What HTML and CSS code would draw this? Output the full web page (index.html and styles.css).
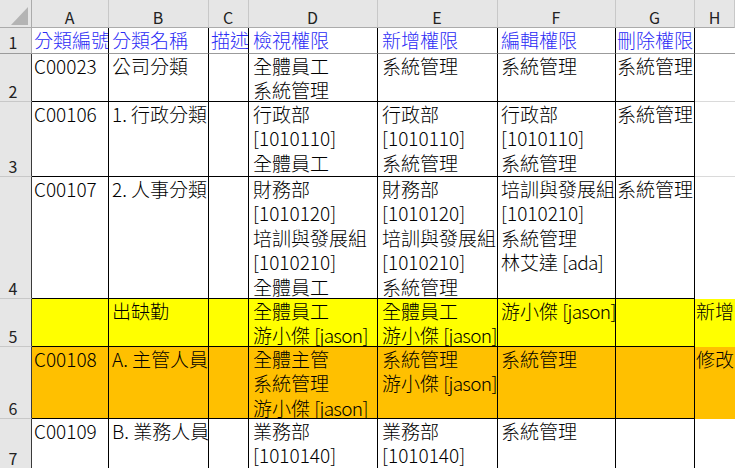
FILE: index.html
```html
<!DOCTYPE html>
<html lang="zh-Hant">
<head>
<meta charset="utf-8">
<title>Sheet</title>
<link rel="stylesheet" href="styles.css">
</head>
<body>
<div class="sheet">
  <div class="c corner"><svg width="31" height="27" viewBox="0 0 31 27"><polygon points="11,25 28,25 28,7" fill="#b4b4b4"/></svg></div>
  <div class="c hd">A</div>
  <div class="c hd">B</div>
  <div class="c hd">C</div>
  <div class="c hd">D</div>
  <div class="c hd">E</div>
  <div class="c hd">F</div>
  <div class="c hd">G</div>
  <div class="c hd hd-last">H</div>

  <div class="c rn">1</div>
  <div class="c t pa">分類編號</div>
  <div class="c t pb">分類名稱</div>
  <div class="c t pc">描述</div>
  <div class="c t pd">檢視權限</div>
  <div class="c t pe">新增權限</div>
  <div class="c t pf">編輯權限</div>
  <div class="c t pg">刪除權限</div>
  <div class="c ht"></div>

  <div class="c rn rb">2</div>
  <div class="c b pa">C00023</div>
  <div class="c b pb">公司分類</div>
  <div class="c b pc"></div>
  <div class="c b pd">全體員工<br>系統管理</div>
  <div class="c b pe">系統管理</div>
  <div class="c b pf">系統管理</div>
  <div class="c b pg">系統管理</div>
  <div class="c h"></div>

  <div class="c rn rb">3</div>
  <div class="c b pa">C00106</div>
  <div class="c b pb">1. 行政分類</div>
  <div class="c b pc"></div>
  <div class="c b pd">行政部<br>[1010110]<br>全體員工</div>
  <div class="c b pe">行政部<br>[1010110]<br>系統管理</div>
  <div class="c b pf">行政部<br>[1010110]<br>系統管理</div>
  <div class="c b pg">系統管理</div>
  <div class="c h"></div>

  <div class="c rn rb">4</div>
  <div class="c b pa">C00107</div>
  <div class="c b pb">2. 人事分類</div>
  <div class="c b pc"></div>
  <div class="c b pd">財務部<br>[1010120]<br>培訓與發展組<br>[1010210]<br>全體員工</div>
  <div class="c b pe">財務部<br>[1010120]<br>培訓與發展組<br>[1010210]<br>系統管理</div>
  <div class="c b pf">培訓與發展組<br>[1010210]<br>系統管理<br>林艾達 <span class="nm">[ada]</span></div>
  <div class="c b pg">系統管理</div>
  <div class="c h h-nob"></div>

  <div class="c rn rb">5</div>
  <div class="c b y pa"></div>
  <div class="c b y pb">出缺勤</div>
  <div class="c b y pc"></div>
  <div class="c b y pd">全體員工<br>游小傑 <span class="nm">[jason]</span></div>
  <div class="c b y pe">全體員工<br>游小傑 <span class="nm">[jason]</span></div>
  <div class="c b y pf">游小傑 <span class="nm">[jason]</span></div>
  <div class="c b y pg"></div>
  <div class="c hf y">新增</div>

  <div class="c rn rb">6</div>
  <div class="c b o pa">C00108</div>
  <div class="c b o pb">A. 主管人員</div>
  <div class="c b o pc"></div>
  <div class="c b o pd">全體主管<br>系統管理<br>游小傑 <span class="nm">[jason]</span></div>
  <div class="c b o pe">系統管理<br>游小傑 <span class="nm">[jason]</span></div>
  <div class="c b o pf">系統管理</div>
  <div class="c b o pg"></div>
  <div class="c hf o">修改</div>

  <div class="c rn rb">7</div>
  <div class="c b pa">C00109</div>
  <div class="c b pb">B. 業務人員</div>
  <div class="c b pc"></div>
  <div class="c b pd">業務部<br>[1010140]</div>
  <div class="c b pe">業務部<br>[1010140]</div>
  <div class="c b pf">系統管理</div>
  <div class="c b pg"></div>
  <div class="c hf"></div>
</div>
</body>
</html>
```
FILE: styles.css
```css
html, body {
  margin: 0;
  padding: 0;
  background: #ffffff;
  overflow: hidden;
}

.sheet {
  display: grid;
  grid-template-columns: 32px 77px 100px 40px 129px 120px 118px 79px 1fr;
  grid-template-rows: 28px 26px 48px 75px 122px 48px 72px 50px;
  width: 735px;
  height: 468px;
  overflow: hidden;
  font-family: "Noto Sans CJK TC", "Noto Sans CJK SC", sans-serif;
  font-size: 19px;
  font-weight: 300;
  line-height: 24.4px;
  color: #000000;
}

.c {
  box-sizing: border-box;
  overflow: hidden;
  white-space: nowrap;
}

.nm {
  letter-spacing: -0.7px;
}

.corner {
  background: #e6e6e6;
  border-right: 1px solid #ababab;
  border-bottom: 1px solid #ababab;
}

.corner svg {
  display: block;
}

.hd {
  background: #e6e6e6;
  border-right: 1px solid #c8c8c8;
  border-bottom: 1px solid #ababab;
  font-size: 16px;
  font-weight: 400;
  line-height: 16px;
  color: #222222;
  display: flex;
  align-items: flex-end;
  justify-content: center;
  padding-bottom: 2px;
  padding-right: 1px;
}

.hd-last {
  padding-right: 0;
}

.rn {
  background: #e6e6e6;
  border-right: 1px solid #ababab;
  border-bottom: 1px solid #9b9b9b;
  font-size: 16px;
  font-weight: 400;
  line-height: 16px;
  color: #222222;
  display: flex;
  align-items: flex-end;
  justify-content: center;
  padding-right: 5px;
  padding-bottom: 3px;
}

.rb {
  border-right-color: #3a3a3a;
  border-bottom-color: #c8c8c8;
  padding-bottom: 2px;
}

/* header row (row 1) */
.t {
  color: #2b2bf5;
  border-right: 1px solid #000000;
  border-bottom: 1px solid #9b9b9b;
}

.ht {
  border-bottom: 1px solid #9b9b9b;
}

/* bordered body cells */
.b {
  border-right: 1px solid #000000;
  border-bottom: 1px solid #000000;
}

/* column H, no borders */
.h {
  border-bottom: 1px solid #dadada;
}

.h-nob {
  border-bottom: none;
}

.hf {
  padding-left: 1px;
}

.y {
  background: #ffff00;
}

.o {
  background: #ffc000;
}

.pa { padding-left: 2px; }
.pb { padding-left: 3px; }
.pc { padding-left: 2px; }
.pd { padding-left: 4px; }
.pe { padding-left: 4px; }
.pf { padding-left: 3px; }
.pg { padding-left: 1px; }
```
